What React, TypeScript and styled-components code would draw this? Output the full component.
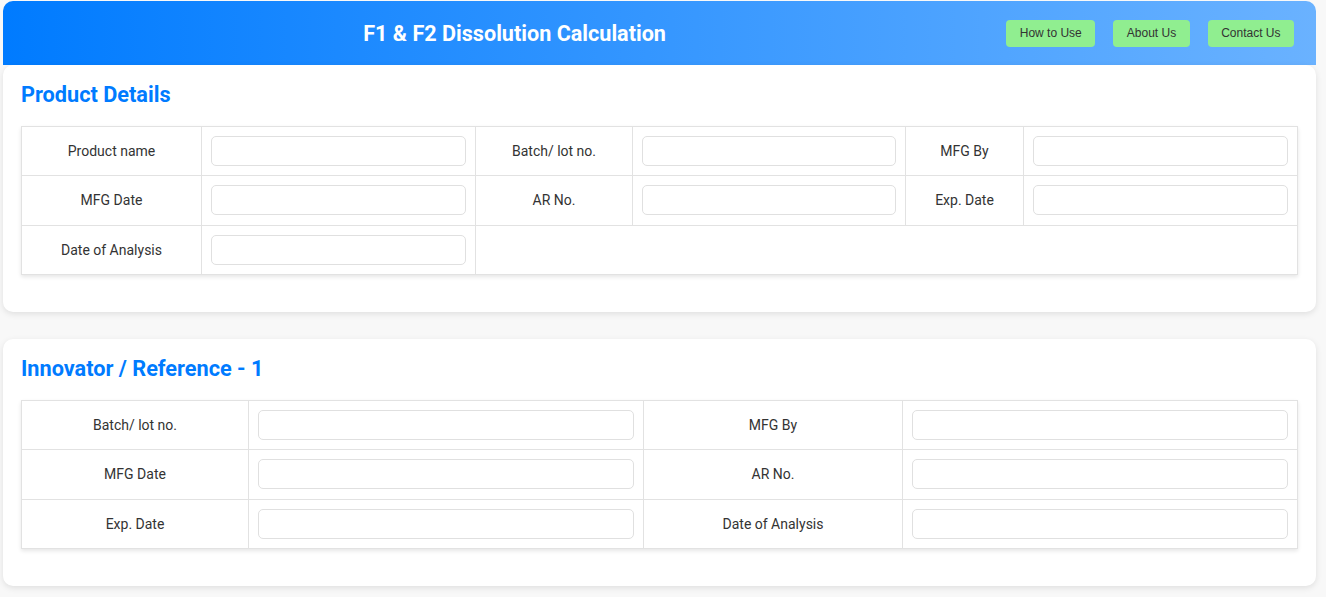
import React from 'react';
import styled, { createGlobalStyle } from 'styled-components';

const GlobalStyle = createGlobalStyle`
  body {
    margin: 0;
    background: #f8f8f8;
    font-family: Roboto, "Noto Sans", sans-serif;
    color: #333;
  }
`;

const Page = styled.div`
  margin: 1px 10px 0 3px;
`;

const Header = styled.header`
  display: flex;
  align-items: center;
  height: 64px;
  padding: 0 22px 0 20px;
  background: linear-gradient(90deg, #007bff, #6ab2ff);
  border-radius: 10px 10px 0 0;
`;

const Title = styled.h1`
  flex: 1;
  margin: 0;
  text-align: center;
  color: #fff;
  font-size: 21.6px;
  font-weight: 700;
`;

const Nav = styled.nav`
  display: flex;
  gap: 18px;
`;

const NavButton = styled.button`
  height: 27px;
  padding: 0 13.5px;
  border: none;
  border-radius: 4px;
  background: #90ee90;
  color: #333;
  font-family: "Liberation Sans", Arial, sans-serif;
  font-size: 12px;
  cursor: pointer;
`;

const Card = styled.section`
  background: #fff;
  border-radius: 10px;
  box-shadow: 0 2px 6px rgba(0, 0, 0, 0.1);
  padding: 17px 18px 36.5px;
  margin-bottom: 27px;
`;

const Heading = styled.h2`
  margin: 0 0 18.8px;
  color: #007bff;
  font-size: 21.7px;
  font-weight: 700;
`;

const Table = styled.table`
  width: 100%;
  border-collapse: collapse;
  table-layout: fixed;
  box-shadow: 0 2px 4px rgba(0, 0, 0, 0.1);
`;

const Cell = styled.td<{ $label?: boolean }>`
  border: 1px solid #e2e2e2;
  padding: 9px 9px 9.5px;
  height: 30px;
  text-align: ${p => (p.$label ? 'center' : 'left')};
  font-size: 14px;
  color: #333;
`;

const Field = styled.input`
  display: block;
  width: 100%;
  box-sizing: border-box;
  height: 30px;
  border: 1px solid #e0e0e0;
  border-radius: 5px;
  padding: 0 8px;
  font-family: inherit;
  font-size: 14px;
`;

type Row = string[];

interface DetailsTableProps {
  widths: number[];
  rows: Row[];
}

function DetailsTable({ widths, rows }: DetailsTableProps) {
  const cols = widths.length;
  return (
    <Table>
      <colgroup>
        {widths.map((w, i) => <col key={i} style={{ width: `${w}px` }} />)}
      </colgroup>
      <tbody>
        {rows.map((row, r) => {
          const used = row.length * 2;
          return (
            <tr key={r}>
              {row.map((label, i) => (
                <React.Fragment key={i}>
                  <Cell $label>{label}</Cell>
                  <Cell><Field type="text" /></Cell>
                </React.Fragment>
              ))}
              {used < cols && <Cell colSpan={cols - used} />}
            </tr>
          );
        })}
      </tbody>
    </Table>
  );
}

export default function App() {
  return (
    <Page>
      <GlobalStyle />
      <Header>
        <Title>F1 &amp; F2 Dissolution Calculation</Title>
        <Nav>
          <NavButton>How to Use</NavButton>
          <NavButton>About Us</NavButton>
          <NavButton>Contact Us</NavButton>
        </Nav>
      </Header>
      <Card>
        <Heading>Product Details</Heading>
        <DetailsTable
          widths={[180, 274, 157, 273, 118, 274]}
          rows={[
            ['Product name', 'Batch/ lot no.', 'MFG By'],
            ['MFG Date', 'AR No.', 'Exp. Date'],
            ['Date of Analysis'],
          ]}
        />
      </Card>
      <Card>
        <Heading>Innovator / Reference - 1</Heading>
        <DetailsTable
          widths={[227, 395, 259, 395]}
          rows={[
            ['Batch/ lot no.', 'MFG By'],
            ['MFG Date', 'AR No.'],
            ['Exp. Date', 'Date of Analysis'],
          ]}
        />
      </Card>
    </Page>
  );
}
